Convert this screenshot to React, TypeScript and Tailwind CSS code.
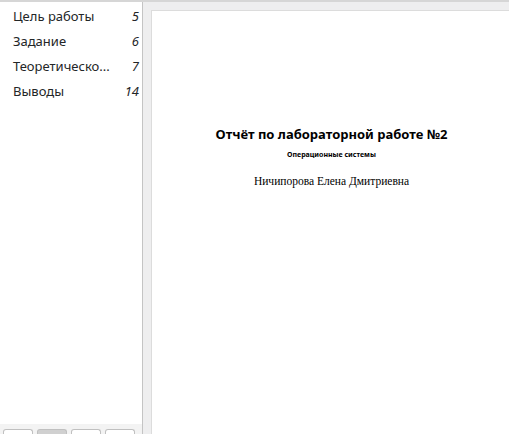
import React from "react";

const items = [
  { t: "Цель работы", p: "5" },
  { t: "Задание", p: "6" },
  { t: "Теоретическо...", p: "7" },
  { t: "Выводы", p: "14" },
];

export default function App() {
  return (
    <div className="w-[509px] h-[434px] flex flex-col overflow-hidden bg-white" style={{ fontFamily: '"Noto Sans", sans-serif' }}>
      <div className="h-[2px] bg-[#d6d6d6] shrink-0" />
      <div className="flex flex-1 min-h-0">
        <div className="w-[143px] shrink-0 border-r border-[#c4c4c4] flex flex-col bg-white">
          <div className="flex-1 pt-[2px]">
            {items.map((it) => (
              <div key={it.t} className="h-[25px] flex items-center justify-between pl-[13px] pr-[3px] text-[13px] text-[#232627]">
                <span>{it.t}</span>
                <span className="italic">{it.p}</span>
              </div>
            ))}
          </div>
          <div className="h-[10px] bg-[#f3f3f3] flex items-end gap-[4px] pl-[3px]">
            <div className="w-[30px] h-[5px] bg-white border border-b-0 border-[#c0c0c0] rounded-t-[3px]" />
            <div className="w-[30px] h-[5px] bg-[#d0d0d0] border border-b-0 border-[#c0c0c0] rounded-t-[3px]" />
            <div className="w-[30px] h-[5px] bg-white border border-b-0 border-[#c0c0c0] rounded-t-[3px]" />
            <div className="w-[30px] h-[5px] bg-white border border-b-0 border-[#c0c0c0] rounded-t-[3px]" />
          </div>
        </div>
        <div className="flex-1 bg-[#eeeeef] pl-[8px] pt-[8px] overflow-hidden">
          <div className="w-[360px] h-full bg-white border-l border-t border-[#dcdcdc] flex flex-col items-center pt-[114px]">
            <div className="text-[13px] font-bold text-black leading-[18px]" style={{ fontFamily: '"Noto Sans", sans-serif' }}>Отчёт по лабораторной работе №2</div>
            <div className="text-[7px] font-bold text-black mt-[7px] leading-[9px]" style={{ fontFamily: '"Noto Sans", sans-serif' }}>Операционные системы</div>
            <div className="text-[11.5px] text-black mt-[16px] leading-[13px]" style={{ fontFamily: '"Liberation Serif", serif' }}>Ничипорова Елена Дмитриевна</div>
          </div>
        </div>
      </div>
    </div>
  );
}
